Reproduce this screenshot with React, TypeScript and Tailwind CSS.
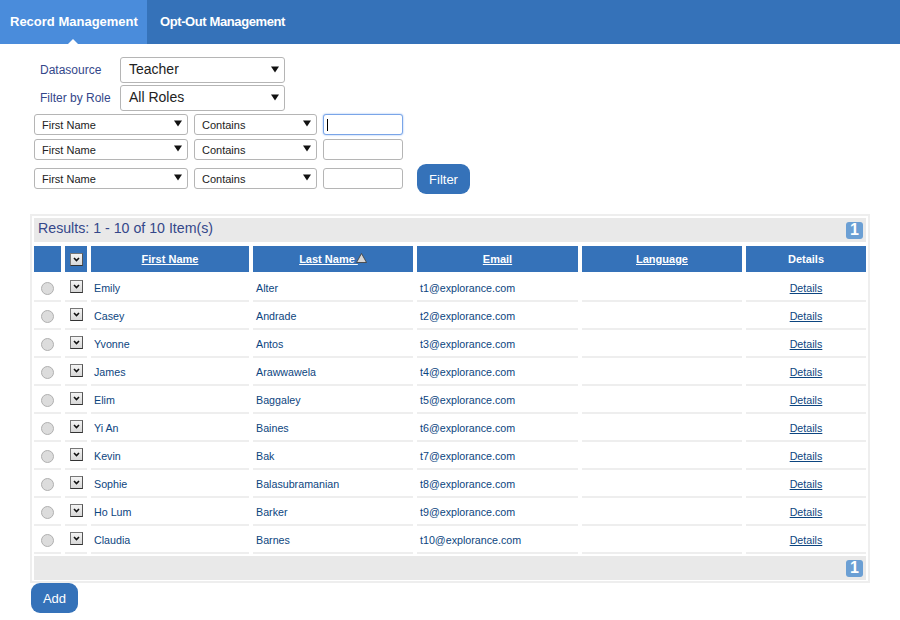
const rows = [
  ['Emily', 'Alter', 't1@explorance.com'],
  ['Casey', 'Andrade', 't2@explorance.com'],
  ['Yvonne', 'Antos', 't3@explorance.com'],
  ['James', 'Arawwawela', 't4@explorance.com'],
  ['Elim', 'Baggaley', 't5@explorance.com'],
  ['Yi An', 'Baines', 't6@explorance.com'],
  ['Kevin', 'Bak', 't7@explorance.com'],
  ['Sophie', 'Balasubramanian', 't8@explorance.com'],
  ['Ho Lum', 'Barker', 't9@explorance.com'],
  ['Claudia', 'Barnes', 't10@explorance.com'],
];

function Arrow() {
  return (
    <svg width="8" height="7" viewBox="0 0 8 7" className="shrink-0">
      <path d="M0 0.5h8L4 6.5z" fill="#111" />
    </svg>
  );
}

function Select({ label, className, large }: { label: string; className: string; large?: boolean }) {
  return (
    <div
      className={`flex items-center justify-between border border-[#b5b5b5] bg-white rounded-[3px] text-[#222] ${
        large ? 'text-[14px] pl-2 pr-[5px]' : 'text-[11px] pl-[7px] pr-[5px]'
      } ${className}`}
    >
      <span className={large ? '-mt-[2px]' : 'mt-[1px]'}>{label}</span>
      <span className={large ? '-mt-[2px]' : '-mt-[3px]'}>
        <Arrow />
      </span>
    </div>
  );
}

function TextBox({ focused, className = '' }: { focused?: boolean; className?: string }) {
  return (
    <div
      className={`relative w-[80px] h-[21px] bg-white rounded-[3px] border ${
        focused ? 'border-[#7aa5e8] shadow-[0_0_2px_#8ab4f0]' : 'border-[#b5b5b5]'
      } ${className}`}
    >
      {focused && <span className="absolute left-[3px] top-[4px] w-px h-[12px] bg-black" />}
    </div>
  );
}

function DropBox() {
  return (
    <div className="flex items-center justify-center w-[13px] h-[13px] border border-[#777] border-r-[#555] border-b-[#333] bg-gradient-to-b from-[#f4f4f4] to-[#d8d8d8]">
      <svg width="7" height="5" viewBox="0 0 7 5">
        <path d="M1 1l2.5 2.5L6 1" fill="none" stroke="#111" strokeWidth="1.6" />
      </svg>
    </div>
  );
}

function Pager() {
  return (
    <span className="flex items-center justify-center w-[17px] h-[17px] rounded-[3px] bg-[#6b9fd4] text-white text-[16px] font-bold leading-none">
      1
    </span>
  );
}

const widths = ['w-[27px]', 'w-[22px]', 'w-[158px]', 'w-[160px]', 'w-[161px]', 'w-[160px]', 'w-[120px]'];

export default function App() {
  return (
    <div className="w-[900px] h-[620px] overflow-hidden bg-white font-['Liberation_Sans',Arial,sans-serif] text-[12px] text-[#0c4580]">
      <nav className="flex h-[44px] bg-[#3572b9] text-white text-[13px] font-bold whitespace-nowrap">
        <div className="relative flex items-center w-[147px] pl-[10px] pb-[1px] bg-[#4a8cdb]">
          Record Management
          <span className="absolute left-[68px] bottom-0 border-x-[5px] border-b-[5px] border-x-transparent border-b-white" />
        </div>
        <div className="flex items-center pl-[13px] pb-[1px] tracking-[-0.4px]">Opt-Out Management</div>
      </nav>

      <section className="pl-[34px] pt-[13px] h-[170px]">
        <div className="flex items-center h-[26px] pl-[6px] text-[#34478a]">
          <span className="w-[80px] -mt-[1px]">Datasource</span>
          <Select large label="Teacher" className="w-[165px] h-[26px]" />
        </div>
        <div className="flex items-center h-[26px] pl-[6px] mt-[2px] text-[#34478a]">
          <span className="w-[80px] -mt-[1px]">Filter by Role</span>
          <Select large label="All Roles" className="w-[165px] h-[26px]" />
        </div>
        <div className="flex items-center gap-[6px] mt-[3px]">
          <Select label="First Name" className="w-[154px] h-[21px]" />
          <Select label="Contains" className="w-[123px] h-[21px]" />
          <TextBox focused />
        </div>
        <div className="flex items-center gap-[6px] mt-[4px]">
          <Select label="First Name" className="w-[154px] h-[21px]" />
          <Select label="Contains" className="w-[123px] h-[21px]" />
          <TextBox />
        </div>
        <div className="flex items-center gap-[6px] mt-[4px]">
          <Select label="First Name" className="w-[154px] h-[21px] mb-[1px]" />
          <Select label="Contains" className="w-[123px] h-[21px] mb-[1px]" />
          <TextBox className="mb-[1px]" />
          <button className="ml-[8px] w-[53px] h-[30px] pt-[1px] rounded-[9px] bg-[#3572b9] text-white text-[13px]">Filter</button>
        </div>
      </section>

      <div className="ml-[30px] w-[840px] h-[369px] border-2 border-[#eeeeee] p-[2px] box-border">
        <div className="flex items-center justify-between h-[24px] pl-[4px] pr-[3px] bg-[#e9e9e9] text-[14.2px] text-[#34478a]">
          <span className="-mt-[2px]">Results: 1 - 10 of 10 Item(s)</span>
          <Pager />
        </div>

        <div className="flex gap-[4px] mt-[4px] h-[26px] text-white text-[11px] font-bold">
          <div className={`${widths[0]} bg-[#3572b9]`} />
          <div className={`${widths[1]} bg-[#3572b9] flex items-center justify-center`}>
            <DropBox />
          </div>
          <div className={`${widths[2]} bg-[#3572b9] flex items-center justify-center underline`}>First Name</div>
          <div className={`${widths[3]} bg-[#3572b9] flex items-center justify-center`}>
            <span className="underline">Last Name&nbsp;</span>
            <svg width="11" height="10" viewBox="0 0 11 10" className="-ml-[2px] -mt-[2px]">
              <path d="M5.5 0.5L10.5 9.5H0.5z" fill="#d6d6d6" stroke="#444" strokeWidth="0.9" />
            </svg>
          </div>
          <div className={`${widths[4]} bg-[#3572b9] flex items-center justify-center underline`}>Email</div>
          <div className={`${widths[5]} bg-[#3572b9] flex items-center justify-center underline`}>Language</div>
          <div className={`${widths[6]} bg-[#3572b9] flex items-center justify-center`}>Details</div>
        </div>

        <div className="mt-[2px]">
          {rows.map(([first, last, email]) => (
            <div key={email} className="flex gap-[4px] h-[28px] text-[10.7px]">
              <div className={`${widths[0]} flex items-center justify-center pt-[2px] border-b-[2px] border-[#eeeeee]`}>
                <span className="w-[13px] h-[13px] rounded-full border border-[#b0b0b0] bg-[#dcdcdc]" />
              </div>
              <div className={`${widths[1]} flex justify-center pt-[6px] border-b-[2px] border-[#eeeeee]`}>
                <DropBox />
              </div>
              <div className={`${widths[2]} flex items-center pl-[3px] pt-[2px] border-b-[2px] border-[#eeeeee]`}>{first}</div>
              <div className={`${widths[3]} flex items-center pl-[3px] pt-[2px] border-b-[2px] border-[#eeeeee]`}>{last}</div>
              <div className={`${widths[4]} flex items-center pl-[3px] pt-[2px] border-b-[2px] border-[#eeeeee]`}>{email}</div>
              <div className={`${widths[5]} border-b-[2px] border-[#eeeeee]`} />
              <div className={`${widths[6]} flex items-center justify-center underline pt-[2px] border-b-[2px] border-[#eeeeee]`}>Details</div>
            </div>
          ))}
        </div>

        <div className="flex items-center justify-end h-[24px] mt-[2px] pr-[3px] bg-[#e9e9e9]">
          <Pager />
        </div>
      </div>

      <button className="block ml-[31px] w-[47px] h-[30px] pt-[1px] rounded-[9px] bg-[#3572b9] text-white text-[13px]">Add</button>
    </div>
  );
}
